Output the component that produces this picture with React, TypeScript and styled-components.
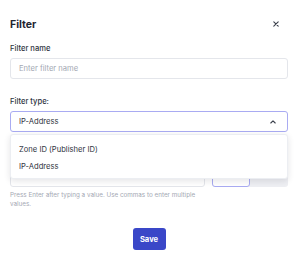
import styled, { createGlobalStyle } from "styled-components";

const GlobalStyle = createGlobalStyle`
  html, body {
    margin: 0;
    padding: 0;
    background: #fff;
  }
  body {
    font-family: 'Inter', 'Noto Sans', sans-serif;
    color: #1f2430;
  }
`;

const Panel = styled.div`
  width: 300px;
  height: 260px;
  box-sizing: border-box;
  padding: 15px 12px 0 10px;
  display: flex;
  flex-direction: column;
`;

const Header = styled.div`
  height: 18px;
  display: flex;
  align-items: center;
  justify-content: space-between;
`;

const Title = styled.h2`
  margin: 0;
  font-size: 10.5px;
  font-weight: 700;
  color: #1f2430;
`;

const CloseButton = styled.button`
  border: none;
  background: none;
  padding: 0;
  margin-right: 8px;
  width: 8px;
  height: 8px;
  display: flex;
  align-items: center;
  justify-content: center;
  color: #3a3f4b;
`;

const Label = styled.label<{ $top: number }>`
  display: block;
  margin-top: ${(p) => p.$top}px;
  font-size: 7.6px;
  line-height: 10px;
  font-weight: 500;
  color: #2f3441;
`;

const Input = styled.div<{ $focused?: boolean }>`
  margin-top: 4px;
  height: 21px;
  box-sizing: border-box;
  border: 1px solid ${(p) => (p.$focused ? "#a9abf2" : "#e4e6eb")};
  border-radius: 3px;
  padding: 0 8px;
  display: flex;
  align-items: center;
  justify-content: space-between;
  font-size: 7.6px;
  color: #2f3441;
  background: #fff;
`;

const Placeholder = styled.span`
  color: #a3a8b3;
`;

const SelectWrap = styled.div`
  position: relative;
`;

const Menu = styled.div`
  position: absolute;
  top: 27px;
  left: 0;
  right: 0;
  height: 45px;
  box-sizing: border-box;
  background: #fff;
  border: 1px solid #eceef2;
  border-radius: 3px;
  box-shadow: 0 2px 6px rgba(30, 35, 50, 0.12);
  padding: 6px 0 0;
  z-index: 5;
`;

const MenuItem = styled.div`
  height: 17px;
  display: flex;
  align-items: center;
  padding: 0 8px;
  font-size: 7.6px;
  color: #2f3441;
`;

const ValueRow = styled.div`
  margin-top: 34px;
  display: flex;
  gap: 7px;
  height: 21px;
`;

const ValueInput = styled.div`
  flex: 1;
  box-sizing: border-box;
  border: 1px solid #e4e6eb;
  border-radius: 3px;
`;

const Toggle = styled.div`
  width: 76px;
  display: flex;
  background: #eeeff3;
  border-radius: 3px;
`;

const ToggleOption = styled.div<{ $active?: boolean }>`
  flex: ${(p) => (p.$active ? "0 0 38px" : "1")};
  box-sizing: border-box;
  border: ${(p) => (p.$active ? "1px solid #a9abf2" : "none")};
  background: ${(p) => (p.$active ? "#fff" : "transparent")};
  border-radius: 3px;
`;

const Helper = styled.p`
  margin: 4px 0 0;
  width: 196px;
  font-size: 6.3px;
  line-height: 9px;
  color: #a3a8b3;
`;

const Footer = styled.div`
  margin-top: 19px;
  display: flex;
  justify-content: center;
`;

const SaveButton = styled.button`
  width: 33px;
  height: 22px;
  border: none;
  border-radius: 3px;
  background: #3a47c8;
  color: #fff;
  font-family: inherit;
  font-size: 7.6px;
  font-weight: 700;
  padding: 0;
`;

const App = () => {
  return (
    <>
      <GlobalStyle />
      <Panel>
        <Header>
          <Title>Filter</Title>
          <CloseButton aria-label="Close">
            <svg width="6" height="6" viewBox="0 0 6 6">
              <path d="M0.8 0.8L5.2 5.2M5.2 0.8L0.8 5.2" stroke="currentColor" strokeWidth="1.1" strokeLinecap="round" />
            </svg>
          </CloseButton>
        </Header>

        <Label $top={11}>Filter name</Label>
        <Input>
          <Placeholder>Enter filter name</Placeholder>
        </Input>

        <Label $top={18}>Filter type:</Label>
        <SelectWrap>
          <Input $focused>
            <span>IP-Address</span>
            <svg width="8" height="6" viewBox="0 0 8 6" style={{ marginRight: 2 }}>
              <path d="M1.8 4L4 1.9L6.2 4" fill="none" stroke="#3a3f4b" strokeWidth="1.1" strokeLinecap="round" strokeLinejoin="round" />
            </svg>
          </Input>
          <Menu>
            <MenuItem>Zone ID (Publisher ID)</MenuItem>
            <MenuItem>IP-Address</MenuItem>
          </Menu>
        </SelectWrap>

        <ValueRow>
          <ValueInput />
          <Toggle>
            <ToggleOption $active />
            <ToggleOption />
          </Toggle>
        </ValueRow>
        <Helper>Press Enter after typing a value. Use commas to enter multiple values.</Helper>

        <Footer>
          <SaveButton>Save</SaveButton>
        </Footer>
      </Panel>
    </>
  );
};

export default App;
